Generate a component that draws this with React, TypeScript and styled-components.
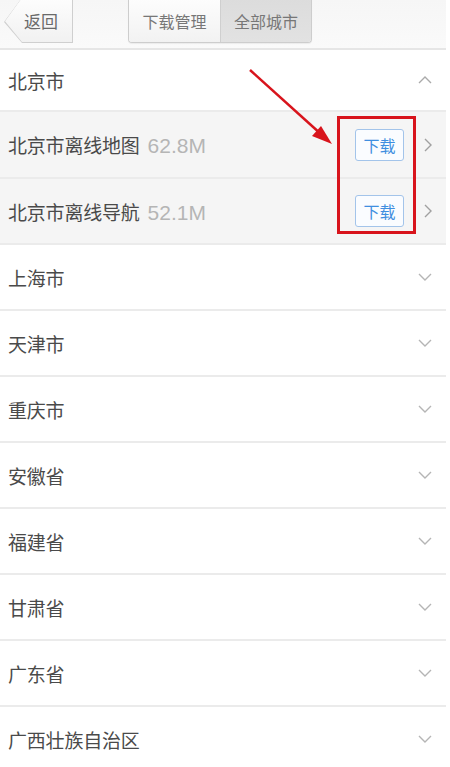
import React from "react";
import styled, { createGlobalStyle } from "styled-components";

const Global = createGlobalStyle`
  html, body { margin: 0; padding: 0; background: #fff; }
  body { font-family: "Noto Sans CJK SC", "Noto Sans", sans-serif; }
  * { box-sizing: border-box; }
`;

const Page = styled.div`
  position: relative;
  width: 450px;
  height: 767px;
  overflow: hidden;
  background: #fff;
`;

const Frame = styled.div`
  width: 446px;
`;

const Header = styled.header`
  height: 50px;
  display: flex;
  align-items: flex-start;
  padding-left: 4px;
  background: linear-gradient(#f6f6f6, #fafafa);
  border-bottom: 2px solid #e6e6e6;
`;

const BackOuter = styled.div`
  width: 69px;
  height: 44px;
  margin-top: -1px;
  padding: 0 1px 1px 1px;
  background: #cfcfcf;
  clip-path: polygon(17px 0, 100% 0, 100% 100%, 18px 100%, 0 52%);
`;

const BackInner = styled.div`
  height: 100%;
  padding-left: 5px;
  display: flex;
  align-items: center;
  justify-content: center;
  font-size: 17px;
  color: #6a6a6a;
  background: linear-gradient(#fdfdfd, #f1f1f1);
  clip-path: polygon(16px 0, 100% 0, 100% 100%, 17px 100%, 0 52%);
`;

const Segmented = styled.div`
  margin-left: 55px;
  margin-top: -1px;
  display: flex;
  height: 44px;
  border: 1px solid #cdcdcd;
  border-top: none;
  border-radius: 0 0 4px 4px;
  overflow: hidden;
  box-shadow: 0 1px 1px rgba(0, 0, 0, 0.06);
`;

const Segment = styled.div<{ $active?: boolean }>`
  width: 91px;
  display: flex;
  align-items: center;
  justify-content: center;
  font-size: 16px;
  color: #777;
  background: ${(p) =>
    p.$active ? "linear-gradient(#dcdcdc, #e2e2e2)" : "linear-gradient(#fdfdfd, #f2f2f2)"};
  & + & {
    border-left: 1px solid #cfcfcf;
  }
`;

const Row = styled.div<{ $sub?: boolean; $h: number }>`
  height: ${(p) => p.$h}px;
  display: flex;
  align-items: center;
  padding: 0 14px 0 8px;
  background: ${(p) => (p.$sub ? "#f5f5f5" : "#fff")};
  border-bottom: 2px solid #ebebeb;
`;

const Name = styled.span`
  flex: 1;
  display: flex;
  align-items: baseline;
  font-size: 19px;
  color: #4a4a4a;
  letter-spacing: -0.2px;
`;

const Size = styled.span`
  margin-left: 8px;
  font-family: "Liberation Sans", Arial, sans-serif;
  font-size: 21px;
  color: #b5b5b5;
  letter-spacing: 0;
`;

const DownloadBtn = styled.button`
  width: 49px;
  height: 32px;
  margin-right: 20px;
  padding: 0;
  border: 1px solid #a3c4ea;
  border-radius: 3px;
  background: #fafcff;
  color: #3f8ee0;
  font-family: "Noto Sans CJK SC", sans-serif;
  font-size: 16px;
  display: flex;
  align-items: center;
  justify-content: center;
`;

const Chevron = styled.svg`
  display: block;
  flex: none;
`;

const RedBox = styled.div`
  position: absolute;
  left: 337px;
  top: 116px;
  width: 79px;
  height: 118px;
  border: 3px solid #d8141c;
`;

const Arrow = styled.svg`
  position: absolute;
  left: 0;
  top: 0;
  pointer-events: none;
`;

const Down = () => (
  <Chevron width="14" height="8" viewBox="0 0 14 8">
    <path d="M1 1 L7 7 L13 1" fill="none" stroke="#b5b5b5" strokeWidth="1.4" />
  </Chevron>
);

const Up = () => (
  <Chevron width="14" height="8" viewBox="0 0 14 8">
    <path d="M1 7 L7 1 L13 7" fill="none" stroke="#aaa" strokeWidth="1.4" />
  </Chevron>
);

const Right = () => (
  <Chevron width="8" height="14" viewBox="0 0 8 14">
    <path d="M1 1 L7 7 L1 13" fill="none" stroke="#a0a0a0" strokeWidth="1.4" />
  </Chevron>
);

const cities = ["上海市", "天津市", "重庆市", "安徽省", "福建省", "甘肃省", "广东省", "广西壮族自治区"];

const subs = [
  { name: "北京市离线地图", size: "62.8M", h: 67 },
  { name: "北京市离线导航", size: "52.1M", h: 66 },
];

export default function App() {
  return (
    <Page>
      <Global />
      <Frame>
        <Header>
          <BackOuter>
            <BackInner>返回</BackInner>
          </BackOuter>
          <Segmented>
            <Segment>下载管理</Segment>
            <Segment $active>全部城市</Segment>
          </Segmented>
        </Header>
        <Row $h={62}>
          <Name>北京市</Name>
          <Up />
        </Row>
        {subs.map((s) => (
          <Row $sub $h={s.h} key={s.name}>
            <Name>
              {s.name}
              <Size>{s.size}</Size>
            </Name>
            <DownloadBtn>下载</DownloadBtn>
            <Right />
          </Row>
        ))}
        {cities.map((c) => (
          <Row $h={66} key={c}>
            <Name>{c}</Name>
            <Down />
          </Row>
        ))}
      </Frame>
      <RedBox />
      <Arrow width="450" height="200" viewBox="0 0 450 200">
        <line x1="250" y1="70" x2="322" y2="135" stroke="#d8141c" strokeWidth="2.5" />
        <polygon points="332,144 312,136 321,126" fill="#d8141c" />
      </Arrow>
    </Page>
  );
}
